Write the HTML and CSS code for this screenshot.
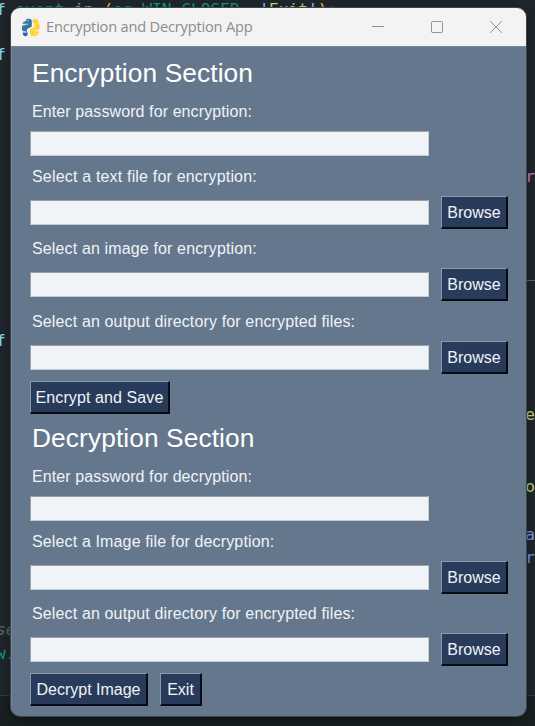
FILE: index.html
```html
<!DOCTYPE html>
<html lang="en">
<head>
<meta charset="utf-8">
<title>Encryption and Decryption App</title>
<link rel="stylesheet" href="styles.css">
</head>
<body>
<div class="editor" aria-hidden="true">
  <div class="code-line"><span><b class="cyan">f</b> <b class="teal">event</b> <b class="pink">in</b> <b class="gold">(</b><b class="teal">sg.WIN_CLOSED</b>, <b class="sky">'</b><b class="lime">Exit</b><b class="sky">'</b><b class="gold">)</b>:</span></div>
  <div class="code-line"></div>
  <div class="code-line raised"><span class="cyan">f</span></div>
  <div class="code-line"></div>
  <div class="code-line"></div>
  <div class="code-line"></div>
  <div class="code-line"></div>
  <div class="code-line"><span class="right pink">r</span></div>
  <div class="code-line"></div>
  <div class="code-line"></div>
  <div class="code-line"></div>
  <div class="code-line"><span class="right blue">_</span></div>
  <div class="code-line"></div>
  <div class="code-line"></div>
  <div class="code-line raised"><span class="cyan">f</span></div>
  <div class="code-line"></div>
  <div class="code-line"></div>
  <div class="code-line"><span class="right lime">e</span></div>
  <div class="code-line"></div>
  <div class="code-line"></div>
  <div class="code-line"><span class="right lime">o</span></div>
  <div class="code-line"></div>
  <div class="code-line"><span class="right blue">a</span></div>
  <div class="code-line"><span class="right blue">r</span></div>
  <div class="code-line"></div>
  <div class="code-line"></div>
  <div class="code-line"><span class="comment">se</span></div>
  <div class="code-line"><span><b class="teal">w</b><b class="sky">.</b></span></div>
  <div class="panel"></div>
</div>

<main class="window">
  <header class="titlebar">
    <svg class="logo" viewBox="0 0 20 20">
      <path fill="#3473a6" d="M4.8 3.5C4.8 1.3 6 .7 8 .7s3.1.9 3.1 2.800v4.200c0 1.700-.8 2.200-2.200 2.500-2 .5-3 1.300-3 3.200v1.500H4.500C2 14.900.7 13.200.7 10.500c0-2.500 1.500-3.600 3.700-3.600h2.800v-.8H1.500c0-1.600 1.300-2.500 3.300-2.600z"/>
      <path fill="#2b628f" d="M1.500 15.200h5.400c0 2.500-.8 4-2.500 4s-2.900-1.500-2.900-4z"/>
      <path fill="#ffd43b" d="M12 3.500C12 1.500 13.200.7 15 .7s3 .9 3 2.800v2c1 .8 1.500 2.100 1.500 3.800 0 2.400-1.400 3.800-3.500 3.900h-2.300v.8h4.800c0 3.200-1.500 5.100-4.700 5.100-3.100 0-4.600-1-4.600-3v-2.500c0-1.700.9-2.400 2.500-2.800 1.600-.4 2.200-1.300 2.200-2.900V5.300H12z"/>
      <circle cx="7" cy="3" r=".7" fill="#fff"/><circle cx="14.700" cy="16.800" r=".7" fill="#fff"/>
      <path d="M1.500 7.200h3.200M2 14.500h3" stroke="#f3f3f3" stroke-width=".9"/>
    </svg>
    <h1 class="title">Encryption and Decryption App</h1>
    <div class="controls">
      <svg viewBox="0 0 12 12"><path d="M0 5.500h12"/></svg>
      <svg viewBox="0 0 12 12"><rect x=".5" y=".5" width="11" height="11" rx="1"/></svg>
      <svg viewBox="0 0 12 12"><path d="M.2.200l11.600 11.600M11.800.200L.2 11.800"/></svg>
    </div>
  </header>
  <form class="content">
    <section>
      <h2 class="heading">Encryption Section</h2>
      <label class="label password">Enter password for encryption:</label>
      <div class="row short"><input class="field"></div>
      <label class="label text-file">Select a text file for encryption:</label>
      <div class="row"><input class="field"><button type="button" class="btn browse">Browse</button></div>
      <label class="label">Select an image for encryption:</label>
      <div class="row"><input class="field"><button type="button" class="btn browse">Browse</button></div>
      <label class="label">Select an output directory for encrypted files:</label>
      <div class="row"><input class="field"><button type="button" class="btn browse">Browse</button></div>
      <div class="actions"><button type="button" class="btn encrypt">Encrypt and Save</button></div>
    </section>
    <section>
      <h2 class="heading second">Decryption Section</h2>
      <label class="label password">Enter password for decryption:</label>
      <div class="row short"><input class="field"></div>
      <label class="label">Select a Image file for decryption:</label>
      <div class="row"><input class="field"><button type="button" class="btn browse">Browse</button></div>
      <label class="label">Select an output directory for encrypted files:</label>
      <div class="row"><input class="field"><button type="button" class="btn browse">Browse</button></div>
      <div class="actions"><button type="button" class="btn decrypt">Decrypt Image</button><button type="button" class="btn exit">Exit</button></div>
    </section>
  </form>
</main>
</body>
</html>
```
FILE: styles.css
```css
* { box-sizing: border-box; }
body {
  margin: 0;
  width: 535px;
  height: 726px;
  overflow: hidden;
  background: #1f262b;
  font-family: "Liberation Sans", Arial, sans-serif;
}

/* code editor behind the window */
.editor {
  position: absolute;
  inset: 0;
  overflow: hidden;
  background: #1f262b;
  color: #b7c5cc;
  font: 16.2px "DejaVu Sans Mono", monospace;
}
.code-line {
  display: flex;
  height: 23.85px;
  line-height: 19px;
  white-space: pre;
  margin-left: -4px;
}
.code-line.raised { line-height: 13px; }
.code-line b { font-weight: normal; }
.right { margin-left: auto; }
.cyan { color: #7fd6f5; }
.teal { color: #129484; }
.pink { color: #c883c8; }
.gold { color: #ffc90e; }
.sky { color: #71cdf8; }
.lime { color: #b5d66c; }
.blue { color: #719bea; }
.comment { color: #53666e; font-style: italic; }
.panel {
  margin-top: 27px;
  height: 40px;
  border-top: 1px solid #343a3e;
  background: #192023;
}

.window {
  position: relative;
  width: 515px;
  height: 708px;
  margin: 8px 0 0 11px;
  border-radius: 9px;
  overflow: hidden;
  background: #64778d;
  box-shadow: 0 0 0 1px #3f474d, 0 3px 10px #0008;
}
.titlebar {
  display: flex;
  align-items: center;
  height: 38px;
  padding-left: 10px;
  background: #f3f3f3;
}
.logo { width: 19.5px; height: 19px; }
.title {
  margin: 0 0 2px 5.5px;
  font: 14.6px "Open Sans", sans-serif;
  letter-spacing: -0.19px;
  color: #8c8c8c;
  white-space: nowrap;
}
.controls {
  display: flex;
  gap: 47px;
  margin-left: auto;
  padding-right: 24px;
}
.controls svg {
  width: 12px;
  height: 12px;
  fill: none;
  stroke: #929292;
}

.content {
  height: 670px;
  margin: 0;
  padding: 7px 18px 0;
  border: solid #75869a;
  border-width: 1px 0 0 1px;
}
.heading {
  margin: 0;
  height: 39px;
  padding-left: 2px;
  font-size: 26.3px;
  font-weight: normal;
  letter-spacing: 0.1px;
  line-height: 39px;
  color: #fff;
}
.heading.second { margin-top: 5px; }
.label {
  display: block;
  height: 22px;
  margin: 8px 0;
  padding-left: 2px;
  font-size: 16px;
  letter-spacing: 0.14px;
  line-height: 22px;
  color: #f0f3f7;
  white-space: nowrap;
}
.password { letter-spacing: 0.1px; }
.text-file { letter-spacing: 0.18px; }
.row {
  display: flex;
  align-items: center;
  gap: 12px;
  height: 33px;
  margin-bottom: 9.4px;
}
.row.short { height: 25px; margin-bottom: 10px; }
.field {
  flex: none;
  width: 399px;
  height: 25px;
  padding: 0;
  border: 1px solid;
  border-color: #a0a0a0 #c5ced8 #c5ced8 #a0a0a0;
  border-radius: 0;
  background: #f0f3f7;
}
.btn {
  height: 33px;
  padding: 2px 0 0;
  border: solid;
  border-width: 1px 2px 2px 1px;
  border-color: #8c98ab #080b12 #080b12 #8c98ab;
  border-radius: 0;
  background: #283b5b;
  color: #f0f3f7;
  font: 16px "Liberation Sans", Arial, sans-serif;
  white-space: nowrap;
}
.browse { width: 67px; }
.encrypt { width: 140px; letter-spacing: 0.1px; }
.decrypt { width: 118px; }
.exit { width: 42px; }
.actions {
  display: flex;
  gap: 12px;
  height: 33px;
  margin-top: -2.4px;
}
```
